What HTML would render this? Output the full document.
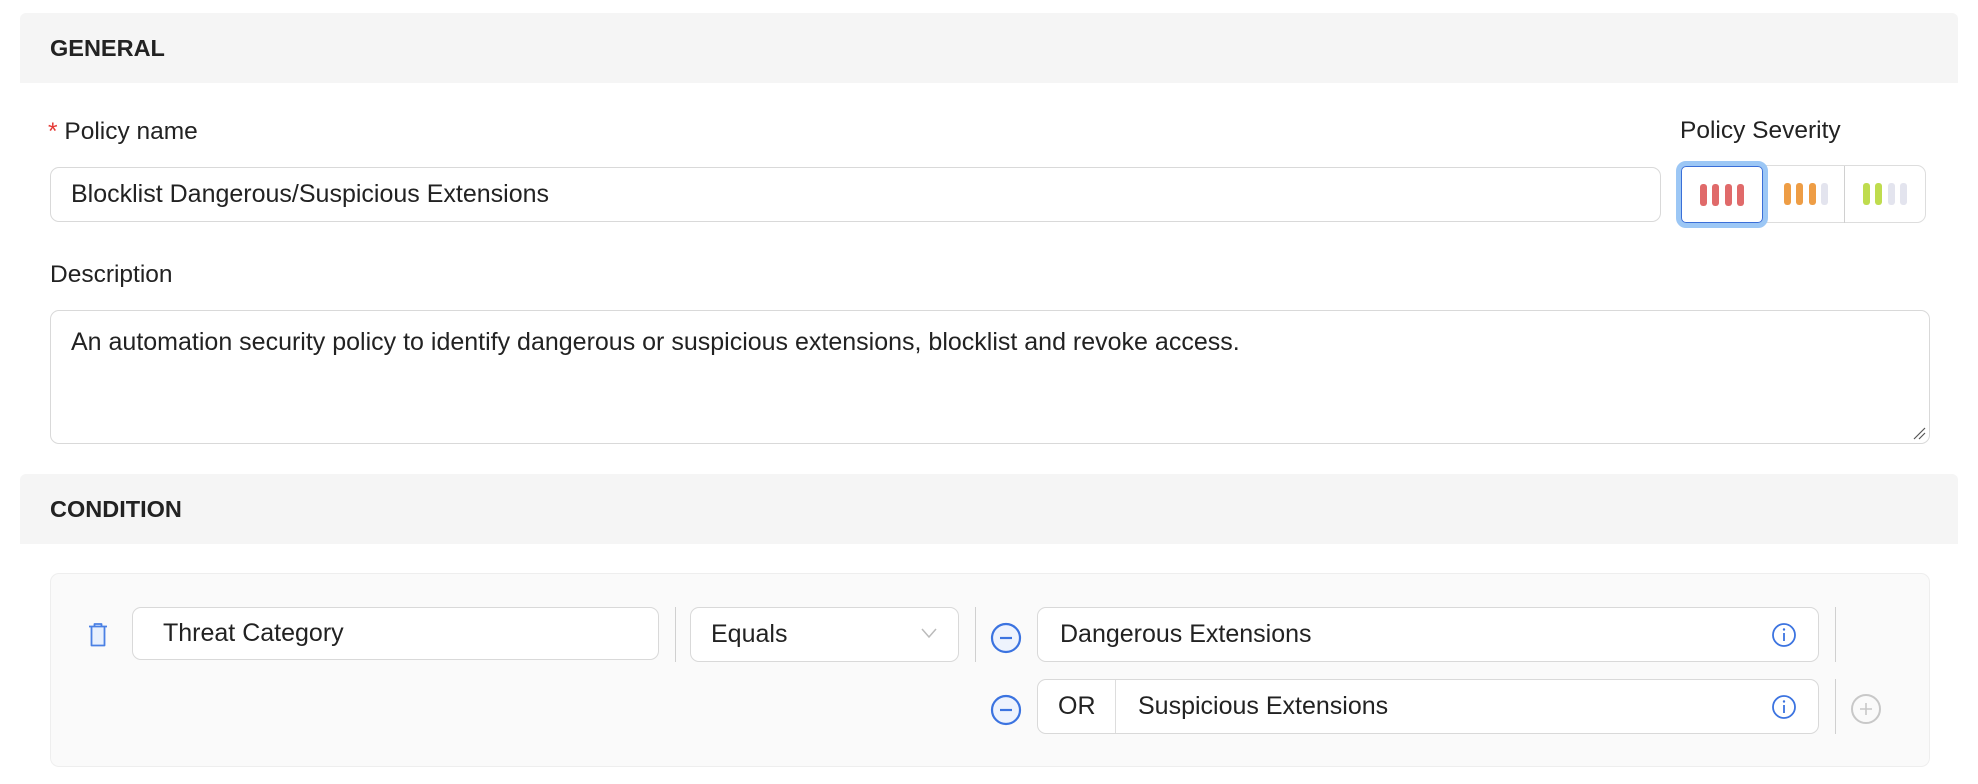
<!DOCTYPE html>
<html><head><style>
*{box-sizing:border-box;margin:0;padding:0}
body{width:1978px;height:784px;background:#fff;font-family:"Liberation Sans",Arial,sans-serif;color:#222;position:relative;overflow:hidden}
.abs{position:absolute}
.hdr{position:absolute;left:20px;width:1938px;height:70px;background:#f5f5f5;border-radius:6px 6px 0 0;font-weight:bold;font-size:23.5px;padding-left:30px;line-height:70px;color:#222}
.lbl{position:absolute;font-size:24.5px;color:#222}
.inp{position:absolute;background:#fff;border:1px solid #d9d9d9;border-radius:9px;font-size:25px;color:#222;display:flex;align-items:center}
.sep{position:absolute;width:1px;background:#d0d0d0}
.bar{display:inline-block;width:7px;height:22px;border-radius:3px;margin:0 2.8px;vertical-align:middle}
</style></head><body>
<div class="hdr" style="top:13px">GENERAL</div>
<div class="lbl" style="left:48px;top:118px"><span style="color:#e53935">*</span> Policy name</div>
<div class="lbl" style="left:1680px;top:117px">Policy Severity</div>
<div class="inp" style="left:50px;top:167px;width:1611px;height:55px;padding-left:20px">Blocklist Dangerous/Suspicious Extensions</div>
<div class="abs" style="left:1678px;top:165px;width:248px;height:58px;border:1px solid #ddd;border-radius:9px;background:#fff"></div>
<div class="abs" style="left:1676px;top:161px;width:92px;height:67px;border:5px solid #9cc7f5;border-radius:10px;background:#fff;display:flex;align-items:center;justify-content:center"><div style="position:absolute;inset:0;border:1px solid #3a6fd8;border-radius:5px"></div>
<span class="bar" style="background:#e06a6a"></span><span class="bar" style="background:#e06a6a"></span><span class="bar" style="background:#e06a6a"></span><span class="bar" style="background:#e06a6a"></span></div>
<div class="abs" style="left:1768px;top:166px;width:76px;height:56px;display:flex;align-items:center;justify-content:center"><span class="bar" style="background:#ee9d45"></span><span class="bar" style="background:#ee9d45"></span><span class="bar" style="background:#ee9d45"></span><span class="bar" style="background:#e3e4ee"></span></div>
<div class="sep" style="left:1844px;top:166px;height:57px"></div>
<div class="abs" style="left:1845px;top:166px;width:80px;height:56px;display:flex;align-items:center;justify-content:center"><span class="bar" style="background:#bfdc4e"></span><span class="bar" style="background:#bfdc4e"></span><span class="bar" style="background:#e3e4ee"></span><span class="bar" style="background:#e3e4ee"></span></div>
<div class="lbl" style="left:50px;top:261px">Description</div>
<div class="inp" style="left:50px;top:310px;width:1880px;height:134px;align-items:flex-start;padding:17px 20px;font-size:25px">An automation security policy to identify dangerous or suspicious extensions, blocklist and revoke access.</div>
<svg class="abs" style="left:1912px;top:426px" width="14" height="14"><path d="M2 13L13 2M7 13L13 7" stroke="#555" stroke-width="1.2"/></svg>
<div class="hdr" style="top:474px">CONDITION</div>
<div class="abs" style="left:50px;top:573px;width:1880px;height:194px;background:#fafafa;border:1px solid #eee;border-radius:9px"></div>
<svg class="abs" style="left:86px;top:622px" width="24" height="26" viewBox="0 0 24 26"><path d="M8.5 4.5V2h7v2.5M3 4.5h18M5.5 4.5v19h13v-19" fill="#e8f0fd" stroke="#4a80e4" stroke-width="1.8" stroke-linejoin="round"/></svg>
<div class="inp" style="left:132px;top:607px;width:527px;height:53px;padding-left:30px">Threat Category</div>
<div class="sep" style="left:675px;top:607px;height:55px"></div>
<div class="inp" style="left:690px;top:607px;width:269px;height:55px;padding-left:20px">Equals</div>
<svg class="abs" style="left:920px;top:627px" width="18" height="12"><path d="M2 2l7 8 7-8" fill="none" stroke="#bbb" stroke-width="1.5"/></svg>
<div class="sep" style="left:975px;top:607px;height:55px"></div>
<svg class="abs" style="left:990px;top:622px" width="32" height="32"><circle cx="16" cy="16" r="14" fill="#eef3fd" stroke="#3b73e0" stroke-width="2.2"/><path d="M10 16h12" stroke="#3b73e0" stroke-width="2.2"/></svg>
<div class="inp" style="left:1037px;top:607px;width:782px;height:55px;padding-left:22px">Dangerous Extensions</div>
<svg class="abs" style="left:1771px;top:622px" width="26" height="26"><circle cx="13" cy="13" r="11" fill="#fff" stroke="#3b73e0" stroke-width="1.8"/><path d="M13 11v8" stroke="#3b73e0" stroke-width="1.8"/><circle cx="13" cy="7.5" r="1.2" fill="#3b73e0"/></svg>
<div class="sep" style="left:1835px;top:607px;height:55px"></div>
<svg class="abs" style="left:990px;top:694px" width="32" height="32"><circle cx="16" cy="16" r="14" fill="#eef3fd" stroke="#3b73e0" stroke-width="2.2"/><path d="M10 16h12" stroke="#3b73e0" stroke-width="2.2"/></svg>
<div class="inp" style="left:1037px;top:679px;width:782px;height:55px;padding-left:20px"><span style="width:58px">OR</span><span style="position:absolute;left:77px;top:0;bottom:0;width:1px;background:#ddd"></span><span style="margin-left:22px">Suspicious Extensions</span></div>
<svg class="abs" style="left:1771px;top:694px" width="26" height="26"><circle cx="13" cy="13" r="11" fill="#fff" stroke="#3b73e0" stroke-width="1.8"/><path d="M13 11v8" stroke="#3b73e0" stroke-width="1.8"/><circle cx="13" cy="7.5" r="1.2" fill="#3b73e0"/></svg>
<div class="sep" style="left:1835px;top:679px;height:55px"></div>
<svg class="abs" style="left:1850px;top:693px" width="32" height="32"><circle cx="16" cy="16" r="14" fill="none" stroke="#c8c8c8" stroke-width="2"/><path d="M10 16h12M16 10v12" stroke="#c8c8c8" stroke-width="1.6"/></svg>
</body></html>
